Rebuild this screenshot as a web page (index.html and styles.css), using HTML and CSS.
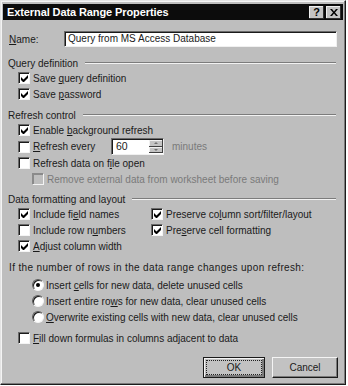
FILE: index.html
```html
<!DOCTYPE html>
<html lang="en">
<head>
  <meta charset="UTF-8" />
  <title>External Data Range Properties</title>
  <link rel="stylesheet" href="styles.css">
</head>
<body>

  <div class="dialog">
    <div class="titlebar">
      <span class="title">External Data Range Properties</span>
      <span class="tb-btn">?</span>
      <span class="tb-btn tb-close">
        <svg width="8" height="7" viewBox="0 0 8 7"><path d="M0 0h2l2 2.5L6 0h2L5 3.5 8 7H6L4 4.5 2 7H0l3-3.5z" fill="#000"/></svg>
      </span>
    </div>

    <div class="content">
      <div class="name-row">
        <span class="name-label"><u>N</u>ame:</span>
        <div class="textbox">Query from MS Access Database</div>
      </div>

      <div class="group g-query"><span>Query definition</span><i></i></div>
      <div class="row"><span class="cb on"></span><span>Save <u>q</u>uery definition</span></div>
      <div class="row"><span class="cb on"></span><span>Save <u>p</u>assword</span></div>

      <div class="group g-refresh"><span>Refresh control</span><i></i></div>
      <div class="row"><span class="cb on"></span><span>Enable <u>b</u>ackground refresh</span></div>
      <div class="row row-every">
        <span class="cb"></span><span class="every-label"><u>R</u>efresh every</span>
        <div class="spin">
          <span class="spin-val">60</span>
          <span class="spin-btns"><b class="up"></b><b class="down"></b></span>
        </div>
        <span class="muted">minutes</span>
      </div>
      <div class="row"><span class="cb"></span><span>Refresh data on f<u>i</u>le open</span></div>
      <div class="row sub muted"><span class="cb dis"></span><span>Remove external data from worksheet before saving</span></div>

      <div class="group g-data"><span>Data formatting and layout</span><i></i></div>
      <div class="cols">
        <div class="col">
          <div class="row"><span class="cb on"></span><span>Include fi<u>e</u>ld names</span></div>
          <div class="row"><span class="cb"></span><span>Include row n<u>u</u>mbers</span></div>
          <div class="row"><span class="cb on"></span><span><u>A</u>djust column width</span></div>
        </div>
        <div class="col">
          <div class="row"><span class="cb on"></span><span>Preserve co<u>l</u>umn sort/filter/layout</span></div>
          <div class="row"><span class="cb on"></span><span>Pre<u>s</u>erve cell formatting</span></div>
        </div>
      </div>

      <p class="question">If the number of rows in the data range changes upon refresh:</p>
      <div class="row sub"><span class="radio on"></span><span>Insert <u>c</u>ells for new data, delete unused cells</span></div>
      <div class="row sub"><span class="radio"></span><span>Insert entire ro<u>w</u>s for new data, clear unused cells</span></div>
      <div class="row sub"><span class="radio"></span><span><u>O</u>verwrite existing cells with new data, clear unused cells</span></div>

      <div class="row row-fill"><span class="cb"></span><span><u>F</u>ill down formulas in columns adjacent to data</span></div>

      <div class="buttons">
        <div class="btn btn-ok"><span>OK</span></div>
        <div class="btn">Cancel</div>
      </div>
    </div>
  </div>

</body>
</html>
```

FILE: styles.css
```css
body {
  margin: 0;
  background: #ffffff;
  font-family: 'Liberation Sans', Arial, sans-serif;
  font-size: 10px;
  color: #1a1a1a;
}

u {
  text-decoration: underline;
  text-underline-offset: 1px;
}

.dialog {
  width: 344px;
  height: 383px;
  background: #bebebe;
  border: 1px solid;
  border-color: #e4e4e4 #1c1c1c #1c1c1c #e4e4e4;
  box-shadow: inset -1px -1px 0 #7a7a7a, inset 1px 1px 0 #f4f4f4;
}

.titlebar {
  height: 16px;
  margin: 3px 2px 0 2px;
  background: #0c0c0c;
  display: flex;
  align-items: center;
  padding: 0 2px 0 4px;
}

.title {
  flex: 1;
  color: #ffffff;
  font-weight: bold;
  font-size: 11px;
  letter-spacing: -0.1px;
}

.tb-btn {
  width: 15px;
  height: 13px;
  margin-left: 2px;
  background: #c4c4c4;
  box-shadow: inset -1px -1px 0 #303030, inset 1px 1px 0 #f0f0f0;
  font-weight: bold;
  font-size: 11px;
  line-height: 13px;
  color: #000;
  display: flex;
  align-items: center;
  justify-content: center;
}

.content {
  padding: 0 7px 0 7px;
}

.name-row {
  display: flex;
  align-items: center;
  height: 16px;
  margin-top: 11px;
}

.name-label {
  width: 55px;
  padding-left: 1px;
}

.textbox {
  flex: 1;
  height: 16px;
  line-height: 14px;
  background: #ffffff;
  border: 1px solid;
  border-color: #6a6a6a #f0f0f0 #f0f0f0 #6a6a6a;
  box-shadow: inset 1px 1px 0 #1a1a1a;
  padding-left: 3px;
  box-sizing: border-box;
  margin-right: 1px;
}

.group {
  display: flex;
  align-items: center;
  height: 14px;
}

.group i {
  flex: 1;
  margin-left: 7px;
  margin-right: 2px;
  border-top: 1px solid #7c7c7c;
  border-bottom: 1px solid #f2f2f2;
}

.g-query {
  margin-top: 9px;
}

.g-refresh {
  margin-top: 6px;
}

.g-data {
  margin-top: 5px;
}

.row {
  display: flex;
  align-items: center;
  height: 16px;
  padding-left: 10px;
  white-space: nowrap;
}

.row.sub {
  padding-left: 24px;
}

.muted {
  color: #7a7a7a;
}

.cb {
  width: 10px;
  height: 10px;
  margin-right: 3px;
  background: #ffffff;
  border: 1px solid;
  border-color: #6a6a6a #f4f4f4 #f4f4f4 #6a6a6a;
  box-shadow: inset 1px 1px 0 #1a1a1a;
  flex: none;
  position: relative;
}

.cb.on::after {
  content: "";
  position: absolute;
  left: 2px;
  top: 2px;
  width: 7px;
  height: 7px;
  background: no-repeat center / 7px 7px url("data:image/svg+xml,%3Csvg xmlns='http://www.w3.org/2000/svg' viewBox='0 0 7 7'%3E%3Cpath d='M0 2v3l2 2h1l4-4V0L2.5 4.5z' fill='%23000'/%3E%3C/svg%3E");
}

.cb.dis {
  background: #bebebe;
  border-color: #8a8a8a #f4f4f4 #f4f4f4 #8a8a8a;
  box-shadow: inset 1px 1px 0 #8a8a8a;
}

.row-every {
  height: 17px;
}

.every-label {
  width: 78px;
}

.spin {
  display: flex;
  width: 53px;
  height: 17px;
  background: #ffffff;
  border: 1px solid;
  border-color: #6a6a6a #f0f0f0 #f0f0f0 #6a6a6a;
  box-shadow: inset 1px 1px 0 #1a1a1a;
  box-sizing: border-box;
  margin-right: 8px;
  font-size: 10.5px;
}

.spin-val {
  flex: 1;
  padding-left: 4px;
  line-height: 15px;
}

.spin-btns {
  display: flex;
  flex-direction: column;
  width: 14px;
  padding: 1px 0;
}

.spin-btns b {
  flex: 1;
  background: #c4c4c4;
  box-shadow: inset -1px -1px 0 #404040, inset 1px 1px 0 #f0f0f0;
  position: relative;
}

.spin-btns b::after {
  content: "";
  position: absolute;
  left: 5px;
  top: 2px;
  border-left: 2px solid transparent;
  border-right: 2px solid transparent;
}

.spin-btns .up::after {
  border-bottom: 2px solid #707070;
}

.spin-btns .down::after {
  border-top: 2px solid #707070;
}

.cols {
  display: flex;
}

.col {
  width: 133px;
}

.question {
  margin: 7px 0 2px 1px;
  height: 14px;
  line-height: 14px;
  letter-spacing: 0.35px;
  white-space: nowrap;
}

.radio {
  width: 10px;
  height: 10px;
  margin-right: 2px;
  border-radius: 50%;
  background: #ffffff;
  border: 1px solid;
  border-color: #5a5a5a #f4f4f4 #f4f4f4 #5a5a5a;
  box-shadow: inset 1px 1px 0 #1a1a1a;
  flex: none;
  position: relative;
}

.radio.on::after {
  content: "";
  position: absolute;
  left: 3px;
  top: 3px;
  width: 4px;
  height: 4px;
  border-radius: 50%;
  background: #000;
}

.row-fill {
  margin-top: 5px;
}

.buttons {
  display: flex;
  justify-content: flex-end;
  gap: 7px;
  margin-top: 11px;
  padding-right: 0;
}

.btn {
  width: 66px;
  height: 21px;
  line-height: 19px;
  text-align: center;
  background: #c2c2c2;
  border: 1px solid;
  border-color: #f4f4f4 #1a1a1a #1a1a1a #f4f4f4;
  box-shadow: inset -1px -1px 0 #7a7a7a;
  box-sizing: border-box;
}

.btn-ok {
  width: 62px;
  border: 1px solid #1a1a1a;
  box-shadow: inset 1px 1px 0 #f4f4f4, inset -2px -2px 0 #7a7a7a;
  padding: 3px;
  line-height: 13px;
}

.btn-ok span {
  display: block;
  outline: 1px dotted #202020;
  height: 13px;
}
```
